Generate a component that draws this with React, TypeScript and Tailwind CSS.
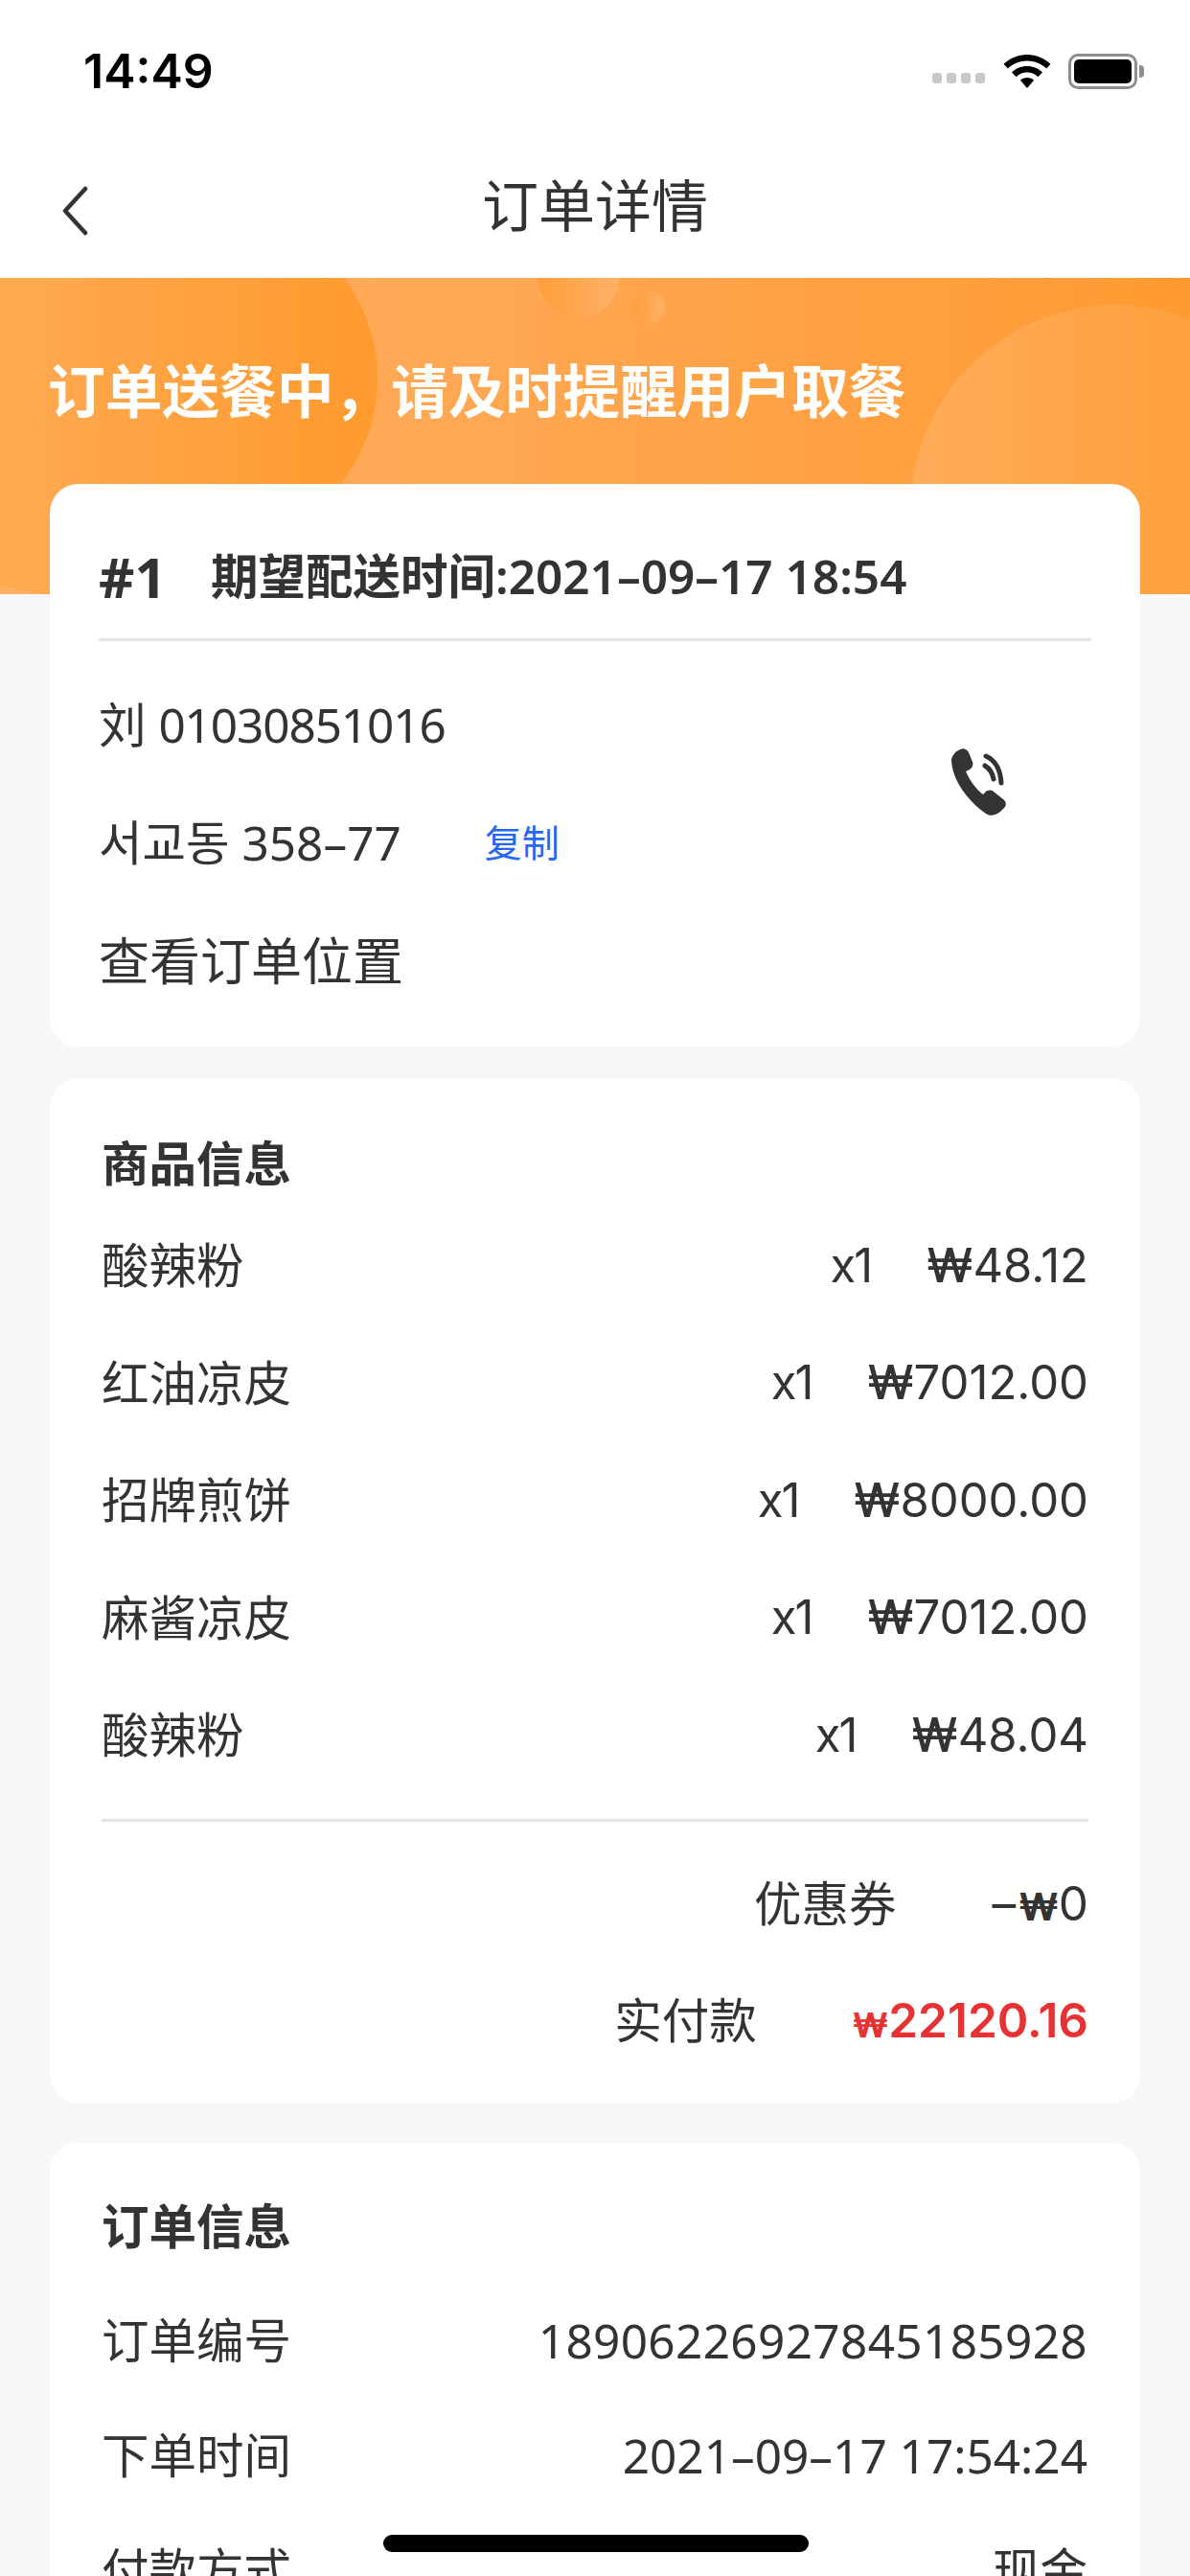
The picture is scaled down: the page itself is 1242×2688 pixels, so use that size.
import React from "react";

interface IRow {
  name: string;
  count: string;
  price: string;
}

const goods: IRow[] = [
  { name: "酸辣粉", count: "x1", price: "48.12" },
  { name: "红油凉皮", count: "x1", price: "7012.00" },
  { name: "招牌煎饼", count: "x1", price: "8000.00" },
  { name: "麻酱凉皮", count: "x1", price: "7012.00" },
  { name: "酸辣粉", count: "x1", price: "48.04" },
];

const orderInfo = [
  { label: "订单编号", value: "18906226927845185928", valueClass: "tracking-[0.350px]" },
  { label: "下单时间", value: "2021–09–17 17:54:24", valueClass: "" },
  { label: "付款方式", value: "现金", valueClass: "" },
];

function StatusBar() {
  return (
    <div className="h-[170px] bg-white flex items-start justify-between pl-[87px] pr-[48px] pt-[46px]">
      <span className="text-[50px] leading-[56px] font-semibold text-black font-['Inter',sans-serif]">14:49</span>
      <div className="flex items-center mt-[10px]">
        <div className="flex gap-[5px] mt-[14px] mr-[19px]">
          <i className="w-[10px] h-[11px] rounded-[3px] bg-[#c8c8c8]" />
          <i className="w-[10px] h-[11px] rounded-[3px] bg-[#c8c8c8]" />
          <i className="w-[10px] h-[11px] rounded-[3px] bg-[#c8c8c8]" />
          <i className="w-[10px] h-[11px] rounded-[3px] bg-[#c8c8c8]" />
        </div>
        <svg width="50" height="36" viewBox="0 0 50 36" className="mr-[18px]">
          <path d="M25 0C15.500 0 7 3.800 0.500 9.800L4.800 14.500C10 9.500 17 6.400 25 6.400S40 9.500 45.200 14.500L49.500 9.800C43 3.800 34.500 0 25 0Z" fill="#000" />
          <path d="M25 12C18.800 12 13.200 14.400 9 18.400L13.500 23.200C16.500 20.300 20.500 18.500 25 18.500S33.500 20.300 36.500 23.200L41 18.400C36.800 14.400 31.200 12 25 12Z" fill="#000" />
          <path d="M25 24C22.200 24 19.800 25 18 26.800L25 35L32 26.800C30.200 25 27.800 24 25 24Z" fill="#000" />
        </svg>
        <div className="w-[72px] h-[37px] rounded-[10px] border-[3px] border-[#8e8e8e] p-[3px]">
          <div className="w-full h-full rounded-[5px] bg-black" />
        </div>
        <div className="w-[5px] h-[13px] rounded-r-[4px] bg-[#8e8e8e] ml-[2px]" />
      </div>
    </div>
  );
}

function NavBar() {
  return (
    <div className="h-[120px] bg-white relative flex items-start justify-center pt-[8px]">
      <svg width="32" height="52" viewBox="0 0 32 52" className="absolute left-[62px] top-[24px]" fill="none">
        <path d="M27 3L6 26L27 49" stroke="#333" strokeWidth="4.500" strokeLinecap="round" strokeLinejoin="round" />
      </svg>
      <h1 className="text-[59px] leading-[72px] font-normal text-[#333]">订单详情</h1>
    </div>
  );
}

function Banner() {
  return (
    <div className="h-[330px] relative overflow-hidden bg-gradient-to-r from-[#ffb065] to-[#ff9a2f] pt-[80px] pl-[50px]">
      <svg className="absolute inset-0" width="1242" height="330" viewBox="0 0 1242 330">
        <defs>
          <linearGradient id="bigLeft" x1="0" y1="0" x2="1" y2="0">
            <stop offset="0" stopColor="#ffb266" />
            <stop offset="1" stopColor="#ff9a2d" />
          </linearGradient>
          <linearGradient id="bigRight" x1="0" y1="0" x2="1" y2="0">
            <stop offset="0" stopColor="#ffac59" />
            <stop offset="1" stopColor="#ff9b30" />
          </linearGradient>
          <linearGradient id="dot" x1="0" y1="0" x2="1" y2="0">
            <stop offset="0" stopColor="#ff9e3a" />
            <stop offset="1" stopColor="#ffb169" />
          </linearGradient>
        </defs>
        <ellipse cx="90" cy="105" rx="304" ry="227" fill="url(#bigLeft)" />
        <circle cx="1165" cy="243" r="215" fill="url(#bigRight)" />
        <circle cx="604" cy="0" r="42" fill="url(#dot)" />
        <circle cx="677" cy="31" r="17" fill="url(#dot)" />
      </svg>
      <p className="relative text-[59.700px] leading-[76px] font-semibold text-white">订单送餐中，请及时提醒用户取餐</p>
    </div>
  );
}

function CustomerCard() {
  return (
    <div className="relative -mt-[115px] mx-[52px] rounded-[30px] bg-white px-[51px] pb-[28px]">
      <div className="h-[164px] pt-[32px] flex items-center border-b-[3px] border-[#e4e4e4] text-[#333]">
        <span className="text-[58px] font-bold w-[117px]">#1</span>
        <span className="text-[49.500px] font-semibold">期望配送时间:2021–09–17 18:54</span>
      </div>
      <div className="mt-[26px] flex items-center justify-between text-[#333]">
        <div>
          <div className="h-[123px] flex items-center text-[49.500px]">
            <span>刘 <span className="tracking-[-1.100px]">01030851016</span></span>
          </div>
          <div className="h-[123px] flex items-center text-[49.500px]">
            서교동 358–77
            <span className="ml-[87px] text-[39px] text-[#2468f2]">复制</span>
          </div>
          <div className="h-[123px] flex items-center text-[53px]">查看订单位置</div>
        </div>
        <svg width="60" height="72" viewBox="0 0 60 72" className="mr-[87px] -mt-[128px]">
          <path d="M10 2C5 4 1 9 1 14C2 34 18 56 37 69C41 72 47 71 52 67L56 63C59 60 58 56 55 54L45 46C42 44 39 44 36 47L34 49C26 43 20 34 16 25L20 23C23 21 24 18 23 15L19 5C17 2 14 0 10 2Z" fill="#333" />
          <path d="M36 19C41 22 44 27 45 33" fill="none" stroke="#333" strokeWidth="5" strokeLinecap="round" />
          <path d="M37 9C46 13 52 21 53 37" fill="none" stroke="#333" strokeWidth="5" strokeLinecap="round" />
        </svg>
      </div>
    </div>
  );
}

function GoodsCard() {
  return (
    <div className="mt-[33px] mx-[52px] rounded-[30px] bg-white pl-[54px] pr-[46px] pt-[44px] pb-[25px] text-[#333]">
      <div className="h-[90px] flex items-center text-[49.500px] font-semibold">商品信息</div>
      {goods.map((row, i) => (
        <div key={i} className="h-[122.500px] flex items-center justify-between text-[49.500px] pr-[8px]">
          <span>{row.name}</span>
          <span className="flex gap-[58px] text-[49px] font-['Inter','Noto_Sans',sans-serif]">
            <span className="tracking-[-2px]">{row.count}</span>
            <span>
              <span className="font-medium">₩</span>
              {row.price}
            </span>
          </span>
        </div>
      ))}
      <div className="mt-[26px] h-[3px] bg-[#e4e4e4] mr-[8px]" />
      <div className="mt-[25px] h-[122px] flex items-center justify-end text-[49.500px] pr-[8px]">
        <span className="mr-[100px]">优惠券</span>
        <span className="font-['Inter','Noto_Sans',sans-serif]">
          –<span className="ml-[3px] font-bold text-[40px]">₩</span>0
        </span>
      </div>
      <div className="h-[122px] flex items-center justify-end text-[49.500px] pr-[8px]">
        <span className="mr-[100px]">实付款</span>
        <span className="font-semibold text-[#e63232] font-['Inter','Noto_Sans',sans-serif]">
          <span className="font-bold text-[36px]">₩</span>22120.16
        </span>
      </div>
    </div>
  );
}

function OrderCard() {
  return (
    <div className="mt-[41px] mx-[52px] rounded-[30px] bg-white pl-[54px] pr-[55px] pt-[43px] text-[#333]">
      <div className="h-[90px] mb-[14px] flex items-center text-[49.500px] font-semibold">订单信息</div>
      {orderInfo.map((row) => (
        <div key={row.label} className="h-[120px] flex items-center justify-between text-[49.500px]">
          <span>{row.label}</span>
          <span className={row.valueClass}>{row.value}</span>
        </div>
      ))}
    </div>
  );
}

function App() {
  return (
    <div className="relative w-[1242px] h-[2688px] overflow-hidden bg-[#f7f7f7] font-['Noto_Sans','Noto_Sans_CJK_SC','Noto_Sans_CJK_KR',sans-serif]">
      <StatusBar />
      <NavBar />
      <Banner />
      <CustomerCard />
      <GoodsCard />
      <OrderCard />
      <div className="absolute left-[400px] top-[2645px] w-[444px] h-[18px] rounded-full bg-black" />
    </div>
  );
}

export default App;
